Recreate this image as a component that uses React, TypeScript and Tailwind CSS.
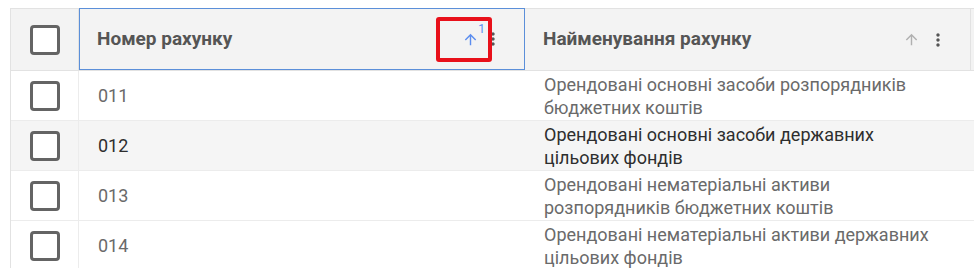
import React from 'react'

const rows = [
  { code: '011', name: 'Орендовані основні засоби розпорядників бюджетних коштів', hover: false },
  { code: '012', name: 'Орендовані основні засоби державних цільових фондів', hover: true },
  { code: '013', name: 'Орендовані нематеріальні активи розпорядників бюджетних коштів', hover: false },
  { code: '014', name: 'Орендовані нематеріальні активи державних цільових фондів', hover: false },
]

const Checkbox = () => (
  <div className="w-[30px] h-[30px] rounded-[4px] border-[3px] border-[#646464] bg-white" />
)

const ArrowUp = ({ color }: { color: string }) => (
  <svg width="17" height="17" viewBox="0 0 24 24" fill={color}>
    <path d="M4 12l1.41 1.41L11 7.83V20h2V7.83l5.58 5.59L20 12l-8-8-8 8z" />
  </svg>
)

const Kebab = () => (
  <svg width="20" height="20" viewBox="0 0 24 24" fill="#555">
    <path d="M12 8c1.1 0 2-.9 2-2s-.9-2-2-2-2 .9-2 2 .9 2 2 2zm0 2c-1.1 0-2 .9-2 2s.9 2 2 2 2-.9 2-2-.9-2-2-2zm0 6c-1.1 0-2 .9-2 2s.9 2 2 2 2-.9 2-2-.9-2-2-2z" />
  </svg>
)

export default function App() {
  return (
    <div className="w-[974px] h-[268px] overflow-hidden bg-white pl-[10px] pt-[8px] font-['Roboto',sans-serif]">
      <div className="w-[1000px] border-l border-t border-[#e2e2e2]">
        {/* header */}
        <div className="flex h-[62px] bg-[#f3f3f3] border-b border-[#e2e2e2]">
          <div className="w-[68px] shrink-0 flex items-center justify-center border-r border-[#e2e2e2]">
            <Checkbox />
          </div>
          <div className="relative w-[446px] shrink-0 flex items-center pl-[17px] pr-[21px] border-[1.5px] border-[#5b8fd9] -mt-px">
            <span className="flex-1 text-[19px] font-bold text-[#555]">Номер рахунку</span>
            <div className="relative flex items-center mr-[4px]">
              <ArrowUp color="#5b8def" />
              <span className="absolute -right-[6px] -top-[11px] text-[12px] text-[#5b8def]">1</span>
            </div>
            <Kebab />
            <div className="absolute left-[356px] top-[8px] w-[56px] h-[45px] rounded-[3px] border-[4px] border-[#e8101a]" />
          </div>
          <div className="w-[446px] shrink-0 flex items-center pl-[18px] pr-[22px] border-r border-[#e2e2e2]">
            <span className="flex-1 text-[19px] font-bold text-[#555]">Найменування рахунку</span>
            <div className="mr-[8px] flex items-center">
              <ArrowUp color="#b0b0b0" />
            </div>
            <Kebab />
          </div>
          <div className="flex-1" />
        </div>
        {/* body */}
        {rows.map((r) => (
          <div
            key={r.code}
            className={`flex h-[50px] border-b border-[#ececec] ${r.hover ? 'bg-[#f5f5f5] text-[#2e2e2e]' : 'bg-white text-[#6a6a6a]'}`}
          >
            <div className="w-[68px] shrink-0 flex items-center justify-center border-r border-[#ececec]">
              <Checkbox />
            </div>
            <div className="w-[446px] shrink-0 flex items-center pl-[19px] text-[18px]">{r.code}</div>
            <div className="w-[446px] shrink-0 flex items-center pl-[19px] pr-[18px] text-[18px] leading-[23px]">
              {r.name}
            </div>
            <div className="flex-1" />
          </div>
        ))}
      </div>
    </div>
  )
}
